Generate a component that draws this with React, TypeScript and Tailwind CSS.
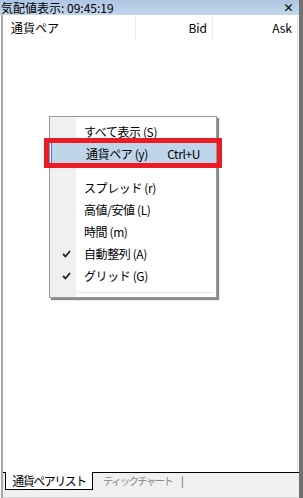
import React from 'react';

const font = { fontFamily: '"Noto Sans CJK JP", "Noto Sans", sans-serif' };

interface MenuItemProps {
  label: string;
  shortcut?: string;
  checked?: boolean;
  active?: boolean;
}

const MenuItem: React.FC<MenuItemProps> = ({ label, shortcut, checked, active }) => (
  <div
    className={
      'relative flex items-center h-[22px] pl-[34px] pr-3 tracking-[-0.4px] ' +
      (active ? 'bg-[#bfd5ea] border-l border-[#3a7fd4] ml-[1px]' : '')
    }
  >
    {checked && (
      <svg className="absolute left-[12px] top-[7px]" width="9" height="8" viewBox="0 0 9 8">
        <path d="M1 4 L3.5 6.5 L8 1" stroke="#222" strokeWidth="1.8" fill="none" />
      </svg>
    )}
    <span className="flex-1">{label}</span>
    {shortcut && <span className="mr-[4px]">{shortcut}</span>}
  </div>
);

const App: React.FC = () => {
  return (
    <div className="relative w-[303px] h-[498px] bg-white overflow-hidden text-[12px] text-black" style={font}>
      <div className="flex flex-col h-full border-r-[4px] border-[#707070]">
        {/* title bar */}
        <div className="flex items-center h-[15px] bg-gradient-to-b from-[#aec6e2] to-[#c3d6ec] pl-[1px] pr-[5px]">
          <span className="flex-1 text-[12px] leading-[15px]">気配値表示: 09:45:19</span>
          <span className="text-[11px] leading-[15px] font-bold">×</span>
        </div>

        {/* list area */}
        <div className="flex-1 flex flex-col border-l-[2px] border-[#a8a8a8] ml-[1px] mr-[1px] border-r border-r-[#e6e6e6]">
          <div className="flex h-[25px] items-center pt-[1px]">
            <div className="w-[133px] pl-[8px] h-full flex items-center border-r border-[#ececec]">通貨ペア</div>
            <div className="w-[77px] h-full flex items-center justify-end pr-[5px] border-r border-[#ececec]">Bid</div>
            <div className="flex-1 h-full flex items-center justify-end pr-[5px]">Ask</div>
          </div>
          <div className="flex-1" />
        </div>

        {/* tabs */}
        <div className="flex flex-col bg-[#f0f0f0] h-[26px] ml-[1px] border-l-[2px] border-[#a8a8a8]">
          <div className="flex h-[18px]">
            <div className="w-[2px] border-t border-black" />
            <div className="w-[88px] bg-white border-l border-r border-b border-black flex items-center justify-center text-[12px] tracking-[-1.5px] leading-none">
              通貨ペアリスト
            </div>
            <div className="flex-1 border-t border-black flex items-center pl-[10px] text-[#8a8a8a] text-[10.5px] leading-none">
              <span className="tracking-[-1.8px]">ティックチャート</span>
              <span className="ml-[9px] text-[#555]">|</span>
            </div>
          </div>
          <div className="flex-1 border-b border-[#d8d8d8]" />
        </div>
      </div>

      {/* context menu */}
      <div className="absolute left-[49px] top-[116px] w-[168px] h-[182px] bg-white border border-[#9a9a9a] shadow-[2px_2px_1px_#8a8a8a]">
        <div className="absolute left-0 top-0 bottom-0 w-[26px] bg-[#f0f0f0]" />
        <div className="relative flex flex-col pt-[4px]">
          <MenuItem label="すべて表示 (S)" />
          <MenuItem label="通貨ペア (y)" shortcut="Ctrl+U" active />
          <div className="h-[12px]" />
          <MenuItem label="スプレッド (r)" />
          <MenuItem label="高値/安値 (L)" />
          <MenuItem label="時間 (m)" />
          <MenuItem label="自動整列 (A)" checked />
          <MenuItem label="グリッド (G)" checked />
          <div className="h-[6px] border-b border-[#e4e4e4] ml-[28px] mr-[4px]" />
        </div>
      </div>

      {/* red highlight frame */}
      <div className="absolute left-[44px] top-[138px] w-[178px] h-[30px] border-[5px] border-[#ec1c24]" />
    </div>
  );
};

export default App;
